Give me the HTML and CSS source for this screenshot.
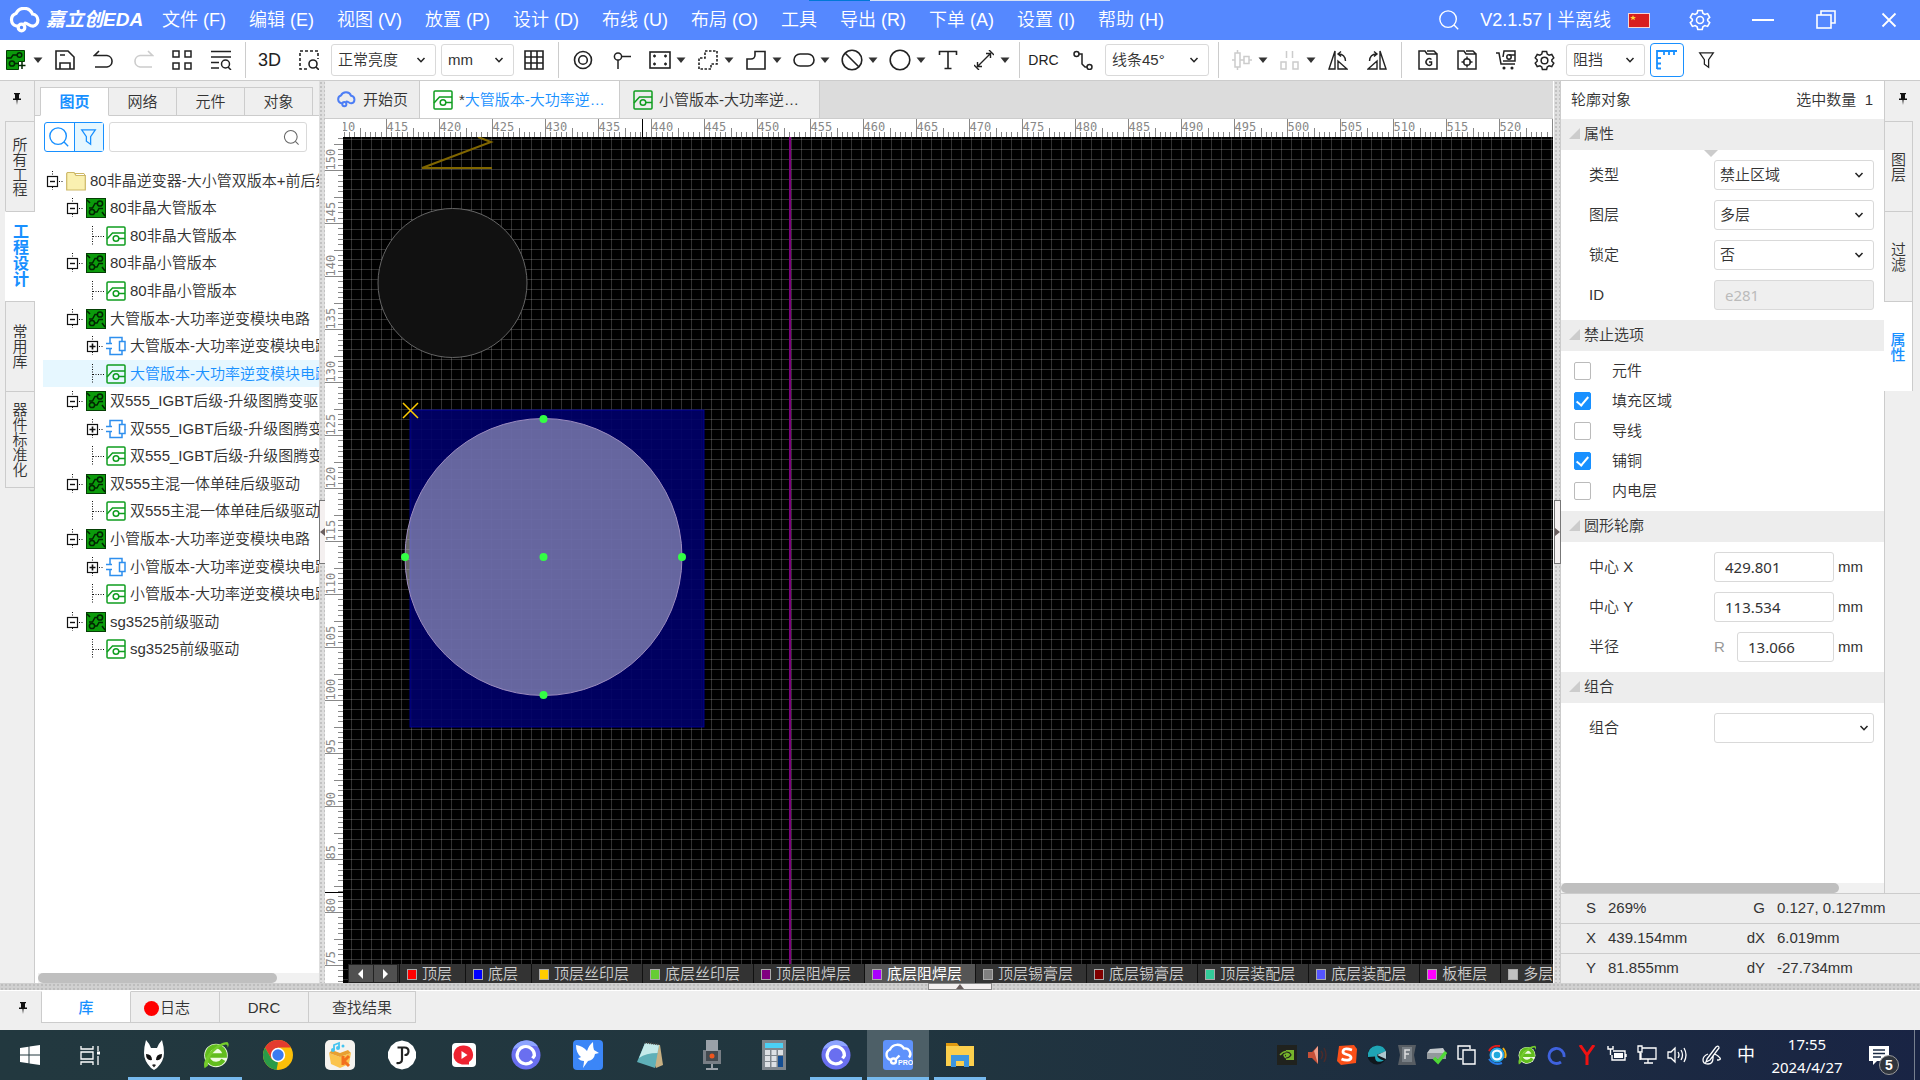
FILE: index.html
```html
<!DOCTYPE html>
<html lang="zh-CN">
<head>
<meta charset="utf-8">
<title>嘉立创EDA</title>
<link rel="stylesheet" href="styles.css">
</head>
<body>
<svg class="defs" aria-hidden="true">
  <symbol id="chev" viewBox="0 0 10 10"><path d="M1.5 3 5 6.7 8.500 3" fill="none" stroke="#222" stroke-width="1.500"/></symbol>
  <symbol id="caret" viewBox="0 0 10 10"><path d="M.5 2.500h9L5 8z" fill="#333"/></symbol>
  <symbol id="pin" viewBox="0 0 12 14"><path d="M3 1h6v1.200H8v4.300h2V8H6.600l-.6 5-.6-5H2V6.500h2V2.200H3z" fill="#111"/></symbol>
  <symbol id="mag" viewBox="0 0 24 24"><g fill="none" stroke="currentColor" stroke-width="1.500"><circle cx="11" cy="11" r="9"/><path d="m17.500 17.500 4.500 4.500"/></g></symbol>
  <symbol id="funnel" viewBox="0 0 20 20"><path d="M2 1.500h16l-5.500 8v9L7.500 15V9.500z" fill="none" stroke="currentColor" stroke-width="1.500"/></symbol>
  <symbol id="gear" viewBox="0 0 22 22"><g fill="none" stroke="currentColor" stroke-width="1.600"><path d="M8.800 1.500h4.400l.7 2.800 1.900 1.100 2.800-.8 2.100 3.700-2 2v1.400l2 2-2.100 3.700-2.800-.8-1.900 1.100-.7 2.800H8.800l-.7-2.800-1.900-1.100-2.800.8-2.100-3.700 2-2v-1.400l-2-2 2.100-3.700 2.800.8 1.900-1.100z"/><circle cx="11" cy="11" r="3.500"/></g></symbol>
  <symbol id="cloud" viewBox="0 0 34 26"><g fill="none" stroke="currentColor" stroke-width="3.200" stroke-linecap="round"><path d="M10 19H8.500A6.500 6.500 0 0 1 8 6.500 9 9 0 0 1 24.500 7 6.200 6.200 0 0 1 25 19.200c-4 0-5-3-8-3"/><circle cx="13.500" cy="20.500" r="3.300"/></g></symbol>
  <symbol id="pcb" viewBox="0 0 20 20"><rect x=".5" y=".5" width="19" height="19" fill="#0b9b0b" stroke="#043f04"/><g fill="none" stroke="#012501" stroke-width="1.500"><circle cx="14" cy="5.500" r="2.600"/><path d="M11.400 5.500H9L6.500 10H3M1 2l3 3"/><circle cx="6" cy="14" r="2.600"/><path d="M8.600 14H11l2-3.500h4M16 14l3 4"/></g></symbol>
  <symbol id="page" viewBox="0 0 20 20"><g fill="none" stroke="#0f9d1f" stroke-width="1.500"><rect x="1" y="1" width="18" height="18" rx="1"/><path d="M1 13 6.500 7H19M13 12.500h6"/><circle cx="10" cy="12.500" r="2.800"/></g></symbol>
  <symbol id="sch" viewBox="0 0 20 20"><g fill="none" stroke="#2e8fee" stroke-width="1.500"><path d="M4 7.500V1.500h12v4M4 12.500v6h12v-4M0 7.500h6M0 12.500h6"/><rect x="13.500" y="5.500" width="5.500" height="9"/></g></symbol>
  <symbol id="folder" viewBox="0 0 20 20"><path d="M.7 2.500V19h18.600V4.500H10l-2-3H1.500z" fill="#faf0b0" stroke="#cdb766" stroke-width="1.200"/><path d="M9 2.500h9l1 2" fill="none" stroke="#cdb766"/></symbol>
  <symbol id="minus" viewBox="0 0 23 20"><rect x="4.500" y="5.500" width="10" height="10" fill="#fff" stroke="#111" stroke-width="1.200"/><path d="M7 10.500h5" stroke="#111" stroke-width="1.400"/><path d="M9.500 0v5M9.500 16v3M16 10.500h5" stroke="#111" stroke-dasharray="1 1.500"/></symbol>
  <symbol id="plus" viewBox="0 0 23 20"><rect x="4.500" y="5.500" width="10" height="10" fill="#fff" stroke="#111" stroke-width="1.200"/><path d="M6.500 10.500h6M9.500 7.500v6" stroke="#111" stroke-width="1.600"/><path d="M9.500 0v5M9.500 16v3M16 10.500h5" stroke="#111" stroke-dasharray="1 1.500"/></symbol>
  <symbol id="leaf" viewBox="0 0 23 20"><path d="M9.500 0v20M10 10.500h11" stroke="#111" stroke-dasharray="1 1.500"/></symbol>
  <symbol id="cring" viewBox="0 0 32 32"><circle cx="16" cy="16" r="15.500" fill="#6a6ff0"/><path d="M2 10a15.500 15.500 0 0 1 27-3Q16 4 2 10z" fill="#8ea4ff"/><path d="M22.500 22.500a9.200 9.200 0 1 1 2.500-6l-2 3" fill="none" stroke="#fff" stroke-width="3.400"/></symbol>
  <symbol id="ebrow" viewBox="0 0 32 32"><circle cx="16" cy="16.500" r="13.500" fill="#eefbe0"/><path d="M24.500 21.500A10 10 0 1 1 26 16.500H9" fill="none" stroke="#62bd1e" stroke-width="5"/><path d="M3 31C-1 22 14 2 29 1q3 3 0 7 1-4-2-4C17 6 5 20 7 28z" fill="#74cc2c"/></symbol>
</svg>

<header class="titlebar">
  <div class="progress"><i></i></div>
  <div class="brand"><svg width="34" height="26"><use href="#cloud"/></svg><strong>嘉立创EDA</strong></div>
  <nav class="menu">
    <button>文件 (F)</button><button>编辑 (E)</button><button>视图 (V)</button><button>放置 (P)</button><button>设计 (D)</button><button>布线 (U)</button><button>布局 (O)</button><button>工具</button><button>导出 (R)</button><button>下单 (A)</button><button>设置 (I)</button><button>帮助 (H)</button>
  </nav>
  <div class="wintools">
    <button aria-label="搜索"><svg width="22" height="22"><use href="#mag"/></svg></button>
    <span class="version">V2.1.57 | 半离线</span>
    <svg class="flag" width="22" height="15" viewBox="0 0 22 15"><rect x=".5" y=".5" width="21" height="14" fill="#d81e1e" stroke="#f3d6d6"/><path d="m5 2 .8 2H8L6.300 5.300l.6 2L5 6 3.200 7.300l.6-2L2 4h2.200z" fill="#ffd83a"/></svg>
    <button class="win" aria-label="设置"><svg width="22" height="22"><use href="#gear"/></svg></button>
    <button class="win" aria-label="最小化"><svg width="24" height="22" viewBox="0 0 24 22"><path d="M1 11h22" stroke="#fff" stroke-width="2"/></svg></button>
    <button class="win" aria-label="还原"><svg width="20" height="20" viewBox="0 0 20 20"><g fill="none" stroke="#fff" stroke-width="1.600"><path d="M5 5V1h14v12h-4"/><rect x="1" y="5" width="14" height="13"/></g></svg></button>
    <button class="win" aria-label="关闭"><svg width="16" height="16" viewBox="0 0 16 16"><path d="m1.500 1.500 13 13m0-13-13 13" stroke="#fff" stroke-width="1.800"/></svg></button>
  </div>
</header>

<div class="toolbar">
  <div class="group">
    <button class="tool combo" aria-label="新建"><svg width="22" height="20" viewBox="0 0 22 20"><path d="M.5.500h18v11h-6v8H.5z" fill="#0b9b0b" stroke="#043f04"/><g fill="none" stroke="#012501" stroke-width="1.500"><circle cx="13.500" cy="5" r="2.300"/><path d="M11 5H7L5 8H1"/><circle cx="6" cy="13.500" r="2.600"/><path d="M9 13.500h4M16 12v7M12.500 15.500h7"/></g></svg><svg width="10" height="10"><use href="#caret"/></svg></button>
    <button class="tool" aria-label="保存"><svg width="20" height="20" viewBox="0 0 20 20"><g fill="none" stroke="#222" stroke-width="1.600"><path d="M1 1h12l6 6v12H1z"/><path d="M5 19v-6h10v6M5 5h5"/></g></svg></button>
    <button class="tool" aria-label="撤销"><svg width="22" height="20" viewBox="0 0 22 20"><path d="M6 1 1.500 5.500H14a5.800 5.800 0 0 1 0 11.500H2" fill="none" stroke="#222" stroke-width="1.600"/></svg></button>
    <button class="tool" aria-label="重做"><svg width="22" height="20" viewBox="0 0 22 20"><path d="m16 1 4.500 4.500H8A5.800 5.800 0 0 0 8 17h12" fill="none" stroke="#ccc" stroke-width="1.600"/></svg></button>
    <button class="tool" aria-label="排列"><svg width="20" height="20" viewBox="0 0 20 20"><path d="M1 1h6v6H1zM13 1h6v6h-6zM1 13h6v6H1zM13 13h6v6h-6z" fill="none" stroke="#222" stroke-width="1.500"/></svg></button>
    <button class="tool" aria-label="查找"><svg width="22" height="20" viewBox="0 0 22 20"><g fill="none" stroke="#222" stroke-width="1.500"><path d="M1 1.500h20M1 7h20M1 12.500h8M1 18h8M18 17l3 3"/><circle cx="15.500" cy="14" r="4"/></g></svg></button>
  </div>
  <div class="group">
    <button class="tool label3d">3D</button>
    <button class="tool" aria-label="框选查找"><svg width="20" height="20" viewBox="0 0 20 20"><g fill="none" stroke="#222" stroke-width="1.600"><path d="M8 19H1V1h18v8" stroke-dasharray="3 2"/><circle cx="14" cy="14" r="4"/><path d="m17 17 3 3"/></g></svg></button>
    <span class="pick bright"><select aria-label="亮度"><option>正常亮度</option></select><svg width="10" height="10"><use href="#chev"/></svg></span>
    <span class="pick unit"><select aria-label="单位"><option>mm</option></select><svg width="10" height="10"><use href="#chev"/></svg></span>
    <button class="tool" aria-label="网格"><svg width="20" height="20" viewBox="0 0 20 20"><path d="M1 1h18v18H1zM1 7h18M1 13h18M7 1v18M13 1v18" fill="none" stroke="#222" stroke-width="1.600"/></svg></button>
  </div>
  <div class="group">
    <button class="tool" aria-label="焊盘"><svg width="20" height="20" viewBox="0 0 20 20"><g fill="none" stroke="#222" stroke-width="1.600"><circle cx="10" cy="10" r="8.500"/><circle cx="10" cy="10" r="4.300"/></g></svg></button>
    <button class="tool" aria-label="过孔"><svg width="20" height="20" viewBox="0 0 20 20"><g fill="none" stroke="#222" stroke-width="1.500"><circle cx="6" cy="6.500" r="3.600"/><path d="M9.500 6.500H19M6 10v9"/></g></svg></button>
    <div class="draw">
      <button class="tool combo" aria-label="板框"><svg width="22" height="18" viewBox="0 0 22 18"><rect x="1" y="1" width="20" height="16" fill="none" stroke="#222" stroke-width="1.600"/><path d="M4 5h3M15 5h3M4 13h3M15 13h3M5.500 3.500v3M16.500 3.500v3M5.500 11.500v3M16.500 11.500v3" stroke="#222" stroke-width="1.300"/></svg><svg width="10" height="10"><use href="#caret"/></svg></button>
      <button class="tool combo" aria-label="铺铜"><svg width="20" height="20" viewBox="0 0 20 20"><path d="M7 1h12v13h-6v5H1V8h6z" fill="none" stroke="#222" stroke-width="1.600" stroke-dasharray="2.500 1.500"/></svg><svg width="10" height="10"><use href="#caret"/></svg></button>
      <button class="tool combo" aria-label="填充"><svg width="20" height="20" viewBox="0 0 20 20"><path d="M9 1.500h10V19H1V9h4a4 4 0 0 0 4-4z" fill="none" stroke="#222" stroke-width="1.600"/></svg><svg width="10" height="10"><use href="#caret"/></svg></button>
      <button class="tool combo" aria-label="槽"><svg width="22" height="14" viewBox="0 0 22 14"><rect x="1" y="1" width="20" height="12" rx="6" fill="none" stroke="#222" stroke-width="1.600"/></svg><svg width="10" height="10"><use href="#caret"/></svg></button>
      <button class="tool combo" aria-label="禁止区域"><svg width="22" height="22" viewBox="0 0 22 22"><g fill="none" stroke="#222" stroke-width="1.600"><circle cx="11" cy="11" r="9.800"/><path d="m4 4 14 14"/></g></svg><svg width="10" height="10"><use href="#caret"/></svg></button>
      <button class="tool combo" aria-label="圆"><svg width="22" height="22" viewBox="0 0 22 22"><circle cx="11" cy="11" r="9.800" fill="none" stroke="#222" stroke-width="1.600"/></svg><svg width="10" height="10"><use href="#caret"/></svg></button>
    </div>
    <button class="tool" aria-label="文本"><svg width="20" height="20" viewBox="0 0 20 20"><path d="M1.500 5V1.500h17V5M10 1.500v17M6.500 18.500h7" fill="none" stroke="#222" stroke-width="1.600"/></svg></button>
    <button class="tool combo measure" aria-label="尺寸"><svg width="20" height="20" viewBox="0 0 20 20"><path d="M3.500 16.500 16.500 3.500M15 0l5 5M0 15l5 5M3.500 12v4.500H8M12 3.500h4.500V8" fill="none" stroke="#222" stroke-width="1.400"/></svg><svg width="10" height="10"><use href="#caret"/></svg></button>
  </div>
  <div class="group">
    <button class="tool drc">DRC</button>
    <button class="tool" aria-label="布线"><svg width="20" height="20" viewBox="0 0 20 20"><g fill="none" stroke="#222" stroke-width="1.500"><circle cx="3.500" cy="4" r="2.500"/><circle cx="16.500" cy="17" r="2.500"/><path d="M6 4h3v10l3 3h2"/></g></svg></button>
    <span class="pick angle"><select aria-label="拐角"><option>线条45°</option></select><svg width="10" height="10"><use href="#chev"/></svg></span>
  </div>
  <div class="group">
    <div class="draw">
      <button class="tool combo" aria-label="对齐"><svg width="20" height="20" viewBox="0 0 20 20"><path d="M3 3h5v14H3zM12 6.500h5v7h-5zM5.500 0v3M5.500 17v3M0 10h3M8 10h4M17 10h3" fill="none" stroke="#ccc" stroke-width="1.500"/></svg><svg width="10" height="10"><use href="#caret"/></svg></button>
      <button class="tool combo" aria-label="分布"><svg width="20" height="20" viewBox="0 0 20 20"><path d="M1 12h5v7H1zM13 12h5v7h-5zM6.500 1v7M12.500 1v7" fill="none" stroke="#ccc" stroke-width="1.500"/></svg><svg width="10" height="10"><use href="#caret"/></svg></button>
    </div>
    <button class="tool" aria-label="左旋转"><svg width="20" height="20" viewBox="0 0 20 20"><path d="M1 19 7 1v18zM10 19v-8l9 8zM13 1.500 10 4l3 2.500M10.500 4q6.500 0 7 7" fill="none" stroke="#222" stroke-width="1.400"/></svg></button>
    <button class="tool" aria-label="右旋转"><svg width="20" height="20" viewBox="0 0 20 20"><path d="M19 19 13 1v18zM10 19v-8l-9 8zM7 1.500 10 4 7 6.500M9.500 4q-6.500 0-7 7" fill="none" stroke="#222" stroke-width="1.400"/></svg></button>
  </div>
  <div class="group last">
    <button class="tool" aria-label="导出Gerber"><svg width="20" height="20" viewBox="0 0 20 20"><path d="M1 19V1h6l2 3h10v15zM9 1h7l3 3M13.500 9.500a3.300 3.300 0 1 0 0 5V12H11" fill="none" stroke="#222" stroke-width="1.500"/></svg></button>
    <button class="tool" aria-label="导出坐标"><svg width="20" height="20" viewBox="0 0 20 20"><g fill="none" stroke="#222" stroke-width="1.500"><path d="M1 19V1h6l2 3h10v15zM9 1h7l3 3M10 6.500v3M10 14.500v3M4.500 12h3M12.500 12h3"/><circle cx="10" cy="12" r="3.300"/></g></svg></button>
    <button class="tool" aria-label="下单"><svg width="20" height="20" viewBox="0 0 20 20"><g fill="none" stroke="#222" stroke-width="1.500"><path d="M0 3h3l2 11h14M7 11h12V1H8L7 7M13 5h6"/><circle cx="13" cy="7" r="2.200"/><circle cx="8" cy="18" r=".8"/><circle cx="16" cy="18" r=".8"/></g></svg></button>
    <button class="tool" aria-label="设置"><svg width="21" height="21"><use href="#gear"/></svg></button>
    <span class="pick block"><select aria-label="布线冲突"><option>阻挡</option></select><svg width="10" height="10"><use href="#chev"/></svg></span>
    <button class="tool rulerbtn" aria-label="标尺"><svg width="22" height="20" viewBox="0 0 22 20"><path d="M1 19V1h20M1 8h4M1 13.500h4M1 18.500h4M8 1v4M13 1v4M18 1v4" fill="none" stroke="#1890ff" stroke-width="1.800"/></svg></button>
    <button class="tool" aria-label="过滤"><svg width="17" height="20"><use href="#funnel"/></svg></button>
  </div>
</div>

<main class="workspace">
  <nav class="side left">
    <button class="pinbtn" aria-label="固定"><svg width="12" height="14"><use href="#pin"/></svg></button>
    <button class="vtab">所有工程</button>
    <button class="vtab on">工程设计</button>
    <button class="vtab">常用库</button>
    <button class="vtab tall">器件标准化</button>
  </nav>

  <section class="project">
    <div class="ptabs"><button class="on">图页</button><button>网络</button><button>元件</button><button>对象</button><i></i></div>
    <div class="search">
      <div class="modes"><button aria-label="查找"><svg width="22" height="22"><use href="#mag"/></svg></button><button class="on" aria-label="过滤"><svg width="17" height="20"><use href="#funnel"/></svg></button></div>
      <label class="box"><input type="text" aria-label="搜索图页"><svg width="17" height="17"><use href="#mag"/></svg></label>
    </div>
    <div class="tree">
      <div class="row"><svg width="23" height="20"><use href="#minus"/></svg><svg width="20" height="20"><use href="#folder"/></svg><span>80非晶逆变器-大小管双版本+前后级</span></div>
      <div class="row l1"><svg width="23" height="20"><use href="#minus"/></svg><svg width="20" height="20"><use href="#pcb"/></svg><span>80非晶大管版本</span></div>
      <div class="row l2"><svg width="23" height="20"><use href="#leaf"/></svg><svg width="20" height="20"><use href="#page"/></svg><span>80非晶大管版本</span></div>
      <div class="row l1"><svg width="23" height="20"><use href="#minus"/></svg><svg width="20" height="20"><use href="#pcb"/></svg><span>80非晶小管版本</span></div>
      <div class="row l2"><svg width="23" height="20"><use href="#leaf"/></svg><svg width="20" height="20"><use href="#page"/></svg><span>80非晶小管版本</span></div>
      <div class="row l1"><svg width="23" height="20"><use href="#minus"/></svg><svg width="20" height="20"><use href="#pcb"/></svg><span>大管版本-大功率逆变模块电路</span></div>
      <div class="row l2"><svg width="23" height="20"><use href="#plus"/></svg><svg width="20" height="20"><use href="#sch"/></svg><span>大管版本-大功率逆变模块电路</span></div>
      <div class="row l2 on"><svg width="23" height="20"><use href="#leaf"/></svg><svg width="20" height="20"><use href="#page"/></svg><span>大管版本-大功率逆变模块电路</span></div>
      <div class="row l1"><svg width="23" height="20"><use href="#minus"/></svg><svg width="20" height="20"><use href="#pcb"/></svg><span>双555_IGBT后级-升级图腾变驱</span></div>
      <div class="row l2"><svg width="23" height="20"><use href="#plus"/></svg><svg width="20" height="20"><use href="#sch"/></svg><span>双555_IGBT后级-升级图腾变</span></div>
      <div class="row l2"><svg width="23" height="20"><use href="#leaf"/></svg><svg width="20" height="20"><use href="#page"/></svg><span>双555_IGBT后级-升级图腾变</span></div>
      <div class="row l1"><svg width="23" height="20"><use href="#minus"/></svg><svg width="20" height="20"><use href="#pcb"/></svg><span>双555主混一体单硅后级驱动</span></div>
      <div class="row l2"><svg width="23" height="20"><use href="#leaf"/></svg><svg width="20" height="20"><use href="#page"/></svg><span>双555主混一体单硅后级驱动</span></div>
      <div class="row l1"><svg width="23" height="20"><use href="#minus"/></svg><svg width="20" height="20"><use href="#pcb"/></svg><span>小管版本-大功率逆变模块电路</span></div>
      <div class="row l2"><svg width="23" height="20"><use href="#plus"/></svg><svg width="20" height="20"><use href="#sch"/></svg><span>小管版本-大功率逆变模块电路</span></div>
      <div class="row l2"><svg width="23" height="20"><use href="#leaf"/></svg><svg width="20" height="20"><use href="#page"/></svg><span>小管版本-大功率逆变模块电路</span></div>
      <div class="row l1"><svg width="23" height="20"><use href="#minus"/></svg><svg width="20" height="20"><use href="#pcb"/></svg><span>sg3525前级驱动</span></div>
      <div class="row l2"><svg width="23" height="20"><use href="#leaf"/></svg><svg width="20" height="20"><use href="#page"/></svg><span>sg3525前级驱动</span></div>
    </div>
    <div class="hscroll"><i></i></div>
  </section>

  <div class="vsplit"><button aria-label="收起左侧"><svg width="5" height="8" viewBox="0 0 5 8"><path d="M5 0v8L0 4z" fill="#6b5f5f"/></svg></button></div>

  <section class="editor">
    <div class="docs">
      <button class="doc home"><svg class="blue" width="21" height="17"><use href="#cloud"/></svg><span>开始页</span></button>
      <button class="doc on"><svg width="20" height="20"><use href="#page"/></svg><span><b>*</b>大管版本-大功率逆…</span></button>
      <button class="doc"><svg width="20" height="20"><use href="#page"/></svg><span>小管版本-大功率逆…</span></button>
    </div>
    <div class="board">
      <i class="corner"></i>
      <svg class="hruler" id="hruler"></svg>
      <svg class="vruler" id="vruler"></svg>
      <div class="canvas">
        <svg class="scene">
          <defs><pattern id="grid" x="8" y="2" width="10" height="10" patternUnits="userSpaceOnUse"><path d="M0 .5h10M.5 0v10" stroke="#fff" stroke-opacity=".19"/></pattern></defs>
          <rect width="100%" height="100%" fill="url(#grid)"/>
          <rect x="67" y="273" width="294" height="317" fill="#00005c" fill-opacity=".75"/>
          <rect x="67" y="273" width="294" height="317" fill="#00003c" fill-opacity=".5" stroke="#000088"/>
          <rect x="67" y="273" width="294" height="317" fill="#0000c0" fill-opacity=".25"/>
          <circle cx="200.500" cy="420" r="138.500" fill="#fff" fill-opacity=".4" stroke="#9c8cc0"/>
          <path d="M135 0 148 5 79 31h70" fill="none" stroke="#806600" stroke-width="2"/>
          <circle cx="109.500" cy="146" r="74.500" fill="#111" stroke="#666"/>
          <line x1="447" y1="0" x2="447" y2="100%" stroke="#800080" stroke-width="2"/>
          <path d="m60 266 15 15m0-15-15 15" stroke="#ffcc00" stroke-width="1.500"/>
          <g fill="#33ff44"><circle cx="200.500" cy="282" r="4"/><circle cx="200.500" cy="420" r="4"/><circle cx="62" cy="420" r="4"/><circle cx="339" cy="420" r="4"/><circle cx="200.500" cy="558" r="4"/></g>
        </svg>
        <div class="layers">
          <div class="nav"><button aria-label="向左"><svg width="6" height="10" viewBox="0 0 6 10"><path d="M5 0v10L0 5z" fill="#fff"/></svg></button><button aria-label="向右"><svg width="6" height="10" viewBox="0 0 6 10"><path d="M1 0v10l5-5z" fill="#fff"/></svg></button></div>
          <button><i class="red"></i>顶层</button><button><i class="navy"></i>底层</button><button><i class="gold"></i>顶层丝印层</button><button><i class="green"></i>底层丝印层</button><button><i class="purple"></i>顶层阻焊层</button><button class="on"><i class="violet"></i>底层阻焊层</button><button><i class="gray"></i>顶层锡膏层</button><button><i class="maroon"></i>底层锡膏层</button><button><i class="teal"></i>顶层装配层</button><button><i class="indigo"></i>底层装配层</button><button><i class="magenta"></i>板框层</button><button><i class="silver"></i>多层</button>
        </div>
      </div>
    </div>
  </section>

  <div class="vsplit right"><button aria-label="收起右侧"><svg width="5" height="8" viewBox="0 0 5 8"><path d="M0 0v8l5-4z" fill="#6b5f5f"/></svg></button></div>

  <section class="inspector">
    <div class="upper">
      <div class="props">
        <div class="ihead"><span>轮廓对象</span><span>选中数量&nbsp; 1</span></div>
        <h2><i></i>属性</h2>
        <div class="fields drop">
          <label class="f"><span>类型</span><span class="pick"><select><option>禁止区域</option></select><svg width="10" height="10"><use href="#chev"/></svg></span></label>
          <label class="f"><span>图层</span><span class="pick"><select><option>多层</option></select><svg width="10" height="10"><use href="#chev"/></svg></span></label>
          <label class="f"><span>锁定</span><span class="pick"><select><option>否</option></select><svg width="10" height="10"><use href="#chev"/></svg></span></label>
          <label class="f"><span>ID</span><input type="text" value="e281" disabled></label>
        </div>
        <h2><i></i>禁止选项</h2>
        <div class="checks">
          <label><input type="checkbox"><span>元件</span></label>
          <label><input type="checkbox" checked><span>填充区域</span></label>
          <label><input type="checkbox"><span>导线</span></label>
          <label><input type="checkbox" checked><span>铺铜</span></label>
          <label><input type="checkbox"><span>内电层</span></label>
        </div>
        <h2><i></i>圆形轮廓</h2>
        <div class="fields">
          <label class="f"><span>中心 X</span><span class="num"><input type="text" value="429.801">mm</span></label>
          <label class="f"><span>中心 Y</span><span class="num"><input type="text" value="113.534">mm</span></label>
          <label class="f"><span>半径</span><span class="num"><em>R</em><input type="text" value="13.066">mm</span></label>
        </div>
        <h2><i></i>组合</h2>
        <div class="fields">
          <label class="f"><span>组合</span><span class="pick end"><select><option></option></select><svg width="10" height="10"><use href="#chev"/></svg></span></label>
        </div>
        <div class="hscroll"><i></i></div>
      </div>
      <nav class="side rightside">
        <button class="pinbtn" aria-label="固定"><svg width="12" height="14"><use href="#pin"/></svg></button>
        <button class="vtab">图层</button>
        <button class="vtab">过滤</button>
        <button class="vtab on">属性</button>
      </nav>
    </div>
    <dl class="status">
      <div><dt>S</dt><dd>269%</dd><dt>G</dt><dd>0.127, 0.127mm</dd></div>
      <div><dt>X</dt><dd>439.154mm</dd><dt>dX</dt><dd>6.019mm</dd></div>
      <div><dt>Y</dt><dd>81.855mm</dd><dt>dY</dt><dd>-27.734mm</dd></div>
    </dl>
  </section>
</main>

<div class="hsplit"><button aria-label="展开底部"><svg width="8" height="5" viewBox="0 0 8 5"><path d="M0 5h8L4 0z" fill="#6b5f5f"/></svg></button></div>

<div class="bottom">
  <button class="pinbtn" aria-label="固定"><svg width="12" height="14"><use href="#pin"/></svg></button>
  <button class="btab on">库</button><button class="btab log"><i></i>日志</button><button class="btab">DRC</button><button class="btab wide">查找结果</button>
</div>

<footer class="taskbar">
  <button class="sys" aria-label="开始"><svg width="20" height="20" viewBox="0 0 20 20"><path d="M0 3 8.500 1.800v7.700H0zM9.500 1.600 20 0v9.500H9.500zM0 10.500h8.500v7.700L0 17zM9.500 10.500H20V20L9.500 18.400z" fill="#fff"/></svg></button>
  <button class="sys" aria-label="任务视图"><svg width="20" height="20" viewBox="0 0 20 20"><path d="M1 1v3h12V1M1 7h12v7H1zM1 20v-3h12v3M18 1v5M18 11v9" fill="none" stroke="#fff" stroke-width="1.300"/><path d="M17 6.500h3v3h-3z" fill="#fff"/></svg></button>
  <button class="app run" aria-label="foobar2000"><svg width="24" height="30" viewBox="0 0 24 30"><path d="M4 0q3 3 5 8h6q2-5 5-8 2 7 2 13 0 8-7 15l-3 2-3-2Q2 21 2 13 2 7 4 0z" fill="#fff"/><path d="M4 14q6 0 6 6-6 1-6-6zM20 14q-6 0-6 6 6 1 6-6z" fill="#111"/><path d="M10 25q2-1.500 4 0l-2 2.500z" fill="#222"/></svg></button>
  <button class="app run" aria-label="浏览器"><svg width="28" height="30"><use href="#ebrow"/></svg></button>
  <button class="app" aria-label="Chrome"><svg width="30" height="30" viewBox="0 0 30 30"><circle cx="15" cy="15" r="15" fill="#fbbf09"/><path d="M2 7.500A15 15 0 0 1 28 7.500H15L8.500 19z" fill="#e33b2e"/><path d="M2 7.500 8.500 19l6.500 3.500-1.500 7.400A15 15 0 0 1 2 7.500z" fill="#2a9b48"/><circle cx="15" cy="15" r="7.200" fill="#fff"/><circle cx="15" cy="15" r="5.700" fill="#3a7bf0"/></svg></button>
  <button class="app" aria-label="音乐盒"><svg width="30" height="30" viewBox="0 0 30 30"><rect width="30" height="30" rx="5" fill="#f5f3ef"/><path d="m4 13 11 4 11-4-2 11-9 4-9-4z" fill="#fbc44d"/><path d="m4 13 3-3 8 3 8-3 3 3-11 4z" fill="#e8a030"/><path d="M18 16v9M24 16l-5 5 5 5" stroke="#f2701d" stroke-width="3" fill="none"/><path d="M9 10V5l5-2v5" stroke="#45c4f0" stroke-width="1.800" fill="none"/><g fill="#45c4f0"><circle cx="8" cy="10" r="2"/><circle cx="13" cy="8" r="2"/><circle cx="18" cy="6" r="1.500"/></g></svg></button>
  <button class="app" aria-label="JP"><svg width="30" height="30" viewBox="0 0 30 30"><path d="M9 2 15 .5 21 2l5 4 3 6v6l-3 6-5 4-6 1.500L9 28l-5-4-3-6v-6l3-6z" fill="#fff"/><path d="M15 7v12.500q0 4-5.500 3.500M10.500 7.500h7q4 0 4 3.800t-4 3.700" fill="none" stroke="#222" stroke-width="2.200"/></svg></button>
  <button class="app" aria-label="播放器"><svg width="24" height="24" viewBox="0 0 24 24"><rect width="24" height="24" rx="4" fill="#fff"/><path d="M12 2.500a9 9 0 0 1 5 16.500v2.500H10A9.500 9.500 0 0 1 12 2.500z" fill="#ee2230"/><path d="m9.500 8 6 4-6 4z" fill="#fff"/></svg></button>
  <button class="app" aria-label="浏览器C"><svg width="30" height="30"><use href="#cring"/></svg></button>
  <button class="app" aria-label="飞鸟"><svg width="30" height="30" viewBox="0 0 30 30"><rect width="30" height="30" rx="4" fill="#3b86f7"/><path d="M3 5q7 1 11 6 2-6 6-9 0 5 1 8l5 3-4 1q-1 6-7 7l-5 7q1-5 1-7-4 0-6-3 2 0 3-1-5-4-5-12z" fill="#fff"/></svg></button>
  <button class="app" aria-label="记事本"><svg width="28" height="28" viewBox="0 0 28 28"><path d="m10 2 14 2 3 20-7 3z" fill="#c8b083"/><path d="m9 2 14 2-4 23L1 21z" fill="#5fb0b8"/><path d="m9 2 14 2-1.500 8Q10 12 3 17z" fill="#c5eaea"/><path d="m9 1.500 14 2" stroke="#444" stroke-width="2" stroke-dasharray="1 1"/></svg></button>
  <button class="app" aria-label="录音机"><svg width="18" height="30" viewBox="0 0 18 30"><path d="M3 0h12v20H3z" fill="#9aa1a8"/><path d="M0 10h3v10h12V10h3v14H0z" fill="#787e85"/><path d="M3 11h12v10H3z" fill="#444a50"/><circle cx="9" cy="16" r="2.500" fill="#f0561d"/><path d="M9 24v5M3 29h12" stroke="#9aa1a8" stroke-width="2"/></svg></button>
  <button class="app" aria-label="计算器"><svg width="24" height="30" viewBox="0 0 24 30"><path d="M0 0h24v30H0z" fill="#7f878e"/><path d="M3 3h18v5H3z" fill="#4bd0f5"/><path d="M3 10h5v5H3zM9.500 10h5v5h-5zM16 10h5v5h-5zM3 16h5v5H3zM9.500 16h5v5h-5zM3 22h5v5H3zM9.500 22h5v5h-5z" fill="#dde1e5"/><path d="M16 16h5v11h-5z" fill="#154e92"/></svg></button>
  <button class="app run" aria-label="浏览器C"><svg width="30" height="30"><use href="#cring"/></svg></button>
  <button class="app run active" aria-label="嘉立创EDA PRO"><svg width="30" height="30" viewBox="0 0 30 30"><rect width="30" height="30" rx="3" fill="#5f92fb"/><g fill="none" stroke="#fff" stroke-width="2.400"><path d="M8 20a5.500 5.500 0 0 1-1-10.500 8 8 0 0 1 14-1 5.500 5.500 0 0 1 5 9"/><circle cx="10.500" cy="21" r="2.500"/><path d="m12.500 19.500 4-4"/></g><text x="15" y="25" font-size="7" font-weight="700" fill="#fff">PRO</text></svg></button>
  <button class="app run" aria-label="文件资源管理器"><svg width="28" height="24" viewBox="0 0 28 24"><path d="M0 0h11l3 4H0z" fill="#e09a10"/><path d="M0 3h28v20H0z" fill="#fccf4d"/><path d="M5 12h18v12h-5v-6h-8v6H5z" fill="#3d96e0"/></svg></button>
  <div class="tray">
    <svg class="ti" viewBox="0 0 20 20"><path d="M0 0h20v20H0z" fill="#20221e"/><path d="M9 5h8v10H9z" fill="#76b42c"/><path d="M3 10q4-5 9-3 4 3 0 5-4 2-5-2 2-2 4 0" fill="none" stroke="#76b42c" stroke-width="1.500"/><path d="M9 7q4 0 5 3-2 3-5 3" fill="none" stroke="#20221e" stroke-width="1.200"/></svg>
    <svg class="ti" viewBox="0 0 20 20"><path d="M1 7h4l6-6v18l-6-6H1z" fill="#c65038"/><path d="m7 6 4-5v18z" fill="#eda08c"/><path d="M14 6q3 4 0 8M17 3q4 7 0 14" fill="none" stroke="#4c2b2a" stroke-width="1.500"/></svg>
    <svg class="ti" viewBox="0 0 20 20"><path d="m2 1 15-1 3 4-1 14-15 2-4-4z" fill="#fa5018"/><path d="M15 5q-9-3-9 2c0 3 8 2 8 5.500s-6 3-9.500 1.500" fill="none" stroke="#fff" stroke-width="2.800"/></svg>
    <svg class="ti" viewBox="0 0 20 20"><circle cx="10" cy="10" r="9.500" fill="#10171d"/><path d="M1 12Q0 2 10 .5q7 0 9 6l-9 3q0 4 7 6-9 4-9-4z" fill="#1fa5b5"/><path d="m10 10 9-4v8z" fill="#adc7cf"/></svg>
    <svg class="ti" viewBox="0 0 20 20"><path d="M1 0h18l-2 10 2 10H1l2-10z" fill="#575d63"/><path d="M5 2h10v15H5z" fill="#777e84"/><path d="M8 14V5h5M8 9h4" fill="none" stroke="#ddd" stroke-width="1.500"/></svg>
    <svg class="ti" viewBox="0 0 20 20"><path d="m3 4 13-1 3 5v6H0V8z" fill="#c3c8cb"/><path d="M0 8h19v6H0z" fill="#92989c"/><path d="m7 13 4 4 8-10" fill="none" stroke="#4fd836" stroke-width="3.500"/></svg>
    <svg class="ti" viewBox="0 0 20 20"><path d="M5 14H1V1h12v3M6 5h12v14H6z" fill="none" stroke="#fff" stroke-width="1.400"/></svg>
    <svg class="ti" viewBox="0 0 20 20"><circle cx="10" cy="10" r="6.500" fill="#f4fbff" stroke="#27a5e5" stroke-width="2"/><circle cx="10" cy="10" r="3.300" fill="#22a9dc"/><g fill="none" stroke-width="2"><path d="M2 6Q5 0 13 1" stroke="#e01b1b"/><path d="M16 3q4 5 2 10" stroke="#f6b211"/><path d="M15 18q-8 3-13-4" stroke="#267be8"/></g></svg>
    <svg class="ti" viewBox="0 0 32 32"><use href="#ebrow"/></svg>
    <svg class="ti" viewBox="0 0 20 20"><path d="M14 17a7.500 7.500 0 1 1 3-5" fill="none" stroke="#3f62de" stroke-width="2.800"/></svg>
    <svg class="ti" viewBox="0 0 20 20"><path d="m3 0 7 10 7-10M10 10v10" fill="none" stroke="#ef1212" stroke-width="3"/></svg>
    <svg class="ti" viewBox="0 0 20 20"><path d="M6 6h12v9H5v-5M19 9v3M1 1v3h5V1M3.500 4v6" fill="none" stroke="#fff" stroke-width="1.400"/><path d="M7 8h9v5H7z" fill="#fff"/></svg>
    <svg class="ti" viewBox="0 0 20 20"><path d="M5 3h14v11H4V8M11 14v4M7 18h9M1 1h4v6H1zM3 7v8" fill="none" stroke="#fff" stroke-width="1.300"/></svg>
    <svg class="ti" viewBox="0 0 20 20"><path d="M1 7h3l4-4v14l-4-4H1zM11 7q2 3 0 6M14 5q3 5 0 10M17 3q4 7 0 14" fill="none" stroke="#fff" stroke-width="1.300"/></svg>
    <svg class="ti pen" viewBox="0 0 20 20"><path d="m5 14 9-12q3-2 3 1L8 15l-4 2zM6 9q-5 2-5 6t5 4 5-6 5-2-1 4" fill="none" stroke="#fff" stroke-width="1.300"/></svg>
    <span class="ime">中</span>
    <time class="clock"><span>17:55</span><span>2024/4/27</span></time>
    <button class="note" aria-label="通知"><svg width="20" height="19" viewBox="0 0 20 19"><path d="M0 0h20v15H8l-4 4v-4H0z" fill="#fff"/><path d="M4 4h12M4 7.500h12M4 11h8" stroke="#1c2c45" stroke-width="1.400"/></svg><b>5</b></button>
  </div>
</footer>
<script src="rulers.js"></script>
</body>
</html>
```
FILE: styles.css
```css
* { box-sizing: border-box; }
body { margin: 0; height: 100vh; display: flex; flex-direction: column; overflow: hidden; background: #efefef; color: #333; font: 350 15px/20px "Liberation Sans", "Noto Sans CJK SC", sans-serif; }
button { border: 0; padding: 0; margin: 0; background: none; color: inherit; font: inherit; white-space: nowrap; }
input, select { font: inherit; color: inherit; min-width: 0; }
svg { display: block; flex: none; }
.defs { width: 0; height: 0; position: absolute; }

/* title bar */
.titlebar { position: relative; flex: none; display: flex; align-items: center; height: 40px; padding: 0 0 0 8px; background: #5588ff; color: #fff; font-size: 18px; }
.progress { position: absolute; top: 0; left: 809px; width: 301px; height: 1px; background: #d5e0f4; }
.progress i { display: block; width: 61px; height: 1px; background: #0078d7; }
.brand { display: flex; align-items: center; gap: 4px; width: 154px; }
.brand strong { font-size: 19px; font-style: italic; font-weight: 700; white-space: nowrap; }
.menu { display: flex; gap: 23px; }
.menu button { height: 40px; }
.wintools { margin-left: auto; display: flex; align-items: center; }
.version { margin: 0 17px 0 20px; white-space: nowrap; }
.flag { margin-right: 18px; }
.win { width: 63px; height: 40px; display: grid; place-items: center; }

/* tool bar */
.toolbar { flex: none; display: flex; align-items: center; height: 41px; padding-left: 3px; background: #fff; border-bottom: 1px solid #ccc; }
.group { display: flex; align-items: center; height: 36px; padding-right: 5px; margin-right: 4px; border-right: 1px solid #ccc; }
.group.last { border: 0; padding-left: 2px; }
.draw { display: flex; gap: 6px; margin-left: 5px; }
.tool { width: 39px; height: 34px; display: flex; align-items: center; justify-content: center; color: #222; }
.combo { width: 42px; display: grid; grid-template-columns: 28px 14px; place-items: center; }
.measure { margin: 0 2px 0 3px; }
.label3d { font-size: 18px; }
.drc { font-size: 14px; font-family: "Liberation Sans Narrow", "Liberation Sans", sans-serif; }
.pick { position: relative; display: block; height: 32px; }
.pick select { width: 100%; height: 100%; padding: 0 6px; border: 1px solid #d9d9d9; border-radius: 3px; background: #fff; appearance: none; }
.pick svg { position: absolute; right: 10px; top: 50%; margin-top: -5px; pointer-events: none; }
.bright { width: 105px; margin-left: 3px; }
.unit { width: 73px; margin-left: 5px; }
.angle { width: 104px; margin-left: 3px; margin-right: 4px; }
.block { width: 79px; margin-left: 2px; }
.rulerbtn { width: 34px; margin: 0 3px 0 5px; border: 1px solid #1890ff; border-radius: 4px; }

/* workspace */
.workspace { flex: 1; min-height: 0; display: flex; }
.side { width: 36px; flex: none; display: flex; flex-direction: column; background: #efefef; }
.side.left { padding-left: 5px; border-right: 1px solid #ccc; width: 35px; }
.rightside { padding-right: 7px; border-left: 1px solid #ccc; }
.pinbtn { flex: none; width: 23px; height: 40px; padding-bottom: 4px; display: grid; place-items: center; }
.rightside .pinbtn { width: 35px; }
.vtab { height: 90px; display: flex; align-items: center; justify-content: center; padding-right: 3px; writing-mode: vertical-rl; border: 1px solid #ccc; border-width: 1px 0 0 1px; }
.vtab.tall { height: 97px; border-bottom-width: 1px; }
.vtab.on { background: #fff; color: #1890ff; font-weight: 700; border-left-color: #fff; }
.left .vtab.on { margin-right: -1px; padding-bottom: 4px; font-size: 16px; }
.rightside .vtab { border-width: 1px 1px 0 0; }
.rightside .vtab.on { margin-left: -1px; border-right-color: #ccc; font-weight: 500; }

.project { width: 284px; flex: none; display: flex; flex-direction: column; background: #fff; overflow: hidden; }
.ptabs { flex: none; display: flex; height: 35px; padding: 6px 0 0 0; background: #efefef; }
.ptabs::before { content: ""; width: 5px; border-bottom: 1px solid #ccc; }
.ptabs button { width: 68px; flex: none; border: 1px solid #ccc; border-left-width: 0; background: #efefef; }
.ptabs button.on { width: 69px; border-left-width: 1px; border-bottom-color: #fff; background: #fff; color: #1890ff; font-weight: 700; }
.ptabs i { flex: 1; border-bottom: 1px solid #ccc; }
.search { display: flex; gap: 5px; padding: 6px 12px 15px 9px; }
.modes { flex: none; display: flex; width: 60px; height: 30px; border: 1px solid #1890ff; border-radius: 3px; color: #1890ff; }
.modes button { flex: 1; display: grid; place-items: center; }
.modes .on { background: #e6f7ff; border-left: 1px solid #1890ff; }
.box { flex: 1; min-width: 0; display: flex; align-items: center; height: 30px; padding-right: 6px; border: 1px solid #d9d9d9; border-radius: 3px; color: #666; }
.box input { flex: 1; border: 0; background: none; }
.tree { height: 496px; display: grid; grid-auto-rows: 1fr; padding-left: 8px; }
.row { display: flex; align-items: center; white-space: nowrap; overflow: hidden; }
.row span { margin-left: 4px; }
.l1 { padding-left: 20px; }
.l2 { padding-left: 40px; }
.row.on { background: #e6f7ff; color: #1890ff; }
.hscroll { margin-top: auto; height: 10px; background: #f1f1f1; }
.hscroll i { display: block; width: 86%; height: 10px; border-radius: 5px; background: #bfbfbf; }
.project .hscroll { margin-left: 3px; }
.project .hscroll i { width: 85%; }

.vsplit { flex: none; width: 6px; display: grid; align-items: center; background: #dedede radial-gradient(circle, #c2c2c2 1px, #dedede 1px) 0 0 / 4px 4px; }
.vsplit.right { width: 8px; border-left: 1px solid #fff; border-right: 1px solid #ccc; }
.vsplit button { height: 64px; width: 100%; border: 1px solid #777; background: #f4f0f0; display: grid; place-items: center; }
.hsplit { flex: none; height: 8px; display: grid; justify-content: center; background: #d0d0d0 radial-gradient(circle, #bdbdbd 1px, #d0d0d0 1px) 0 0 / 4px 4px; border-bottom: 1px solid #fff; }
.hsplit button { width: 64px; height: 7px; border: 1px solid #888; background: #f4f0f0; display: grid; place-items: center; }

/* editor */
.editor { flex: 1; min-width: 0; display: flex; flex-direction: column; }
.docs { flex: none; height: 38px; display: flex; background: #dcdcdc; border-bottom: 1px solid #ccc; }
.doc { width: 200px; display: flex; align-items: center; gap: 6px; padding-left: 13px; background: #ededed; border-right: 1px solid #ccc; }
.doc.home { width: 95px; padding-left: 11px; }
.doc.on { background: #fff; color: #1890ff; }
.doc b { color: #333; font-weight: 400; }
.blue { color: #4d7ef5; }
.board { flex: 1; min-height: 0; display: grid; grid-template: 18px 1fr / 18px 1fr; background: #fff; }
.hruler, .vruler { width: 100%; height: 100%; overflow: hidden; }
.hruler text, .vruler text { font: 12px "DejaVu Sans Mono", monospace; fill: #888; }
.canvas { position: relative; background: #000; overflow: hidden; }
.scene { width: 100%; height: 100%; position: absolute; inset: 0; }
.layers { position: absolute; left: 5px; right: 0; bottom: 0; height: 19px; display: flex; background: #333; color: #ccc; overflow: hidden; line-height: 20px; }
.layers > button { flex: none; display: flex; align-items: center; padding: 0 13px 0 7px; border-left: 1px solid #111; height: 20px; }
.layers > button.on { background: #555; color: #fff; font-weight: 400; }
.layers i { width: 10px; height: 11px; margin-right: 5px; border: 1px solid #aaa; }
.nav { flex: none; display: flex; width: 50px; margin-right: 1px; padding: 1px; background: #222; }
.nav button { flex: 1; background: #505050; display: grid; place-items: center; }
.nav button + button { border-left: 1px solid #222; }
.red { background: #f00; } .navy { background: #00f; } .gold { background: #fc0; } .green { background: #66cc33; }
.purple { background: #800080; } .violet { background: #a0f; } .gray { background: #808080; } .maroon { background: #800000; }
.teal { background: #33cc99; } .indigo { background: #5555ff; } .magenta { background: #f0f; } .silver { background: #c0c0c0; }

/* inspector */
.inspector { flex: none; width: 359px; display: flex; flex-direction: column; }
.upper { flex: 1; min-height: 0; display: flex; }
.props { flex: 1; display: flex; flex-direction: column; background: #fff; }
.ihead { display: flex; justify-content: space-between; align-items: center; height: 38px; padding: 0 11px 0 10px; }
h2 { margin: 0; height: 31px; padding: 0 0 2px 8px; display: flex; align-items: center; gap: 4px; background: #ededed; font: inherit; }
h2 i { border: solid transparent; border-width: 0 0 11px 11px; border-bottom-color: #ccc; }
.fields { position: relative; display: grid; gap: 10px; padding: 10px; }
.drop::before { content: ""; position: absolute; top: 0; left: 143px; border: solid transparent; border-width: 7px 7px 0; border-top-color: #ccc; }
.f { display: grid; grid-template-columns: 125px 1fr; height: 30px; padding-left: 18px; align-items: center; }
.f .pick { height: 30px; }
.f .pick.end svg { right: 5px; }
.f select { padding: 0 5px; }
.f input { width: 100%; height: 30px; padding: 0 10px; border: 1px solid #d9d9d9; border-radius: 3px; font-family: "Noto Sans", sans-serif; font-weight: 400; }
.f input:disabled { background: #efefef; color: #bbb; }
.num { display: flex; align-items: center; gap: 4px; padding-right: 11px; }
.num em { flex: none; width: 19px; font-style: normal; color: #999; }
.checks { display: grid; grid-auto-rows: 30px; padding: 5px 13px; }
.checks label { display: flex; align-items: center; gap: 21px; }
.checks input { appearance: none; width: 17px; height: 18px; margin: 0; border: 1px solid #bbb; border-radius: 2px; background: #fff; display: grid; place-items: center; }
.checks input:checked { background: #1890ff; border-color: #1890ff; }
.checks input:checked::before { content: ""; width: 5px; height: 10px; margin-bottom: 3px; border: solid #fff; border-width: 0 2px 2px 0; rotate: 40deg; }
.status { margin: 0; background: #ededed; }
.status div { height: 30px; padding-bottom: 2px; display: grid; grid-template-columns: 35px 1fr 32px 143px; column-gap: 12px; align-items: center; border-top: 1px solid #ccc; }
.status dt { text-align: right; }
.status dd { margin: 0; }

/* bottom panel */
.bottom { flex: none; display: flex; height: 39px; background: #efefef; }
.bottom .pinbtn { width: 41px; padding: 0 0 2px 5px; height: 36px; }
.btab { width: 89px; height: 32px; padding-top: 2px; border: 1px solid #ccc; border-left-width: 0; display: flex; align-items: center; justify-content: center; }
.btab.on { width: 90px; border-left-width: 1px; border-top-color: #fff; background: #fff; color: #1890ff; font-weight: 500; }
.btab.wide { width: 107px; }
.btab.log { padding-right: 16px; gap: 1px; }
.btab i { width: 15px; height: 15px; border-radius: 50%; background: #f00; }

/* task bar */
.taskbar { flex: none; display: flex; height: 50px; background: linear-gradient(90deg, #22383f, #21363f 45%, #1d2d40 75%, #192444); color: #fff; }
.sys { width: 60px; display: grid; place-items: center; }
.sys + .app { margin-left: 3px; }
.app { width: 62px; display: grid; place-items: center; border: solid transparent; border-width: 0 5px; }
.app.run { background: linear-gradient(#76b9ed, #76b9ed) 0 100% / 100% 3px no-repeat padding-box; }
.app.active { border-width: 0; background: linear-gradient(#76b9ed, #76b9ed) 0 100% / 100% 3px no-repeat, #4d5f67; }
.tray { margin-left: auto; display: flex; align-items: center; gap: 10px; padding-right: 5px; }
.ti { width: 20px; height: 20px; }
.ti.pen { margin-left: 5px; }
.ime { margin-left: 5px; font-size: 18px; font-weight: 400; width: 18px; }
.clock { display: grid; width: 84px; gap: 3px; text-align: center; font: 400 15px/20px "Noto Sans", sans-serif; }
.note { position: relative; width: 56px; height: 50px; display: grid; place-items: center start; padding-left: 10px; border-right: 1px solid #77808f; }
.note b { position: absolute; left: 20px; bottom: 5px; width: 20px; height: 20px; border-radius: 50%; border: 1px solid #999; background: #30353d; font-size: 14px; line-height: 18px; }
```
FILE: rulers.js
```js
const NS = 'http://www.w3.org/2000/svg';
const PITCH = 53;

function add(svg, name, attrs, text) {
  const el = document.createElementNS(NS, name);
  for (const key in attrs) el.setAttribute(key, attrs[key]);
  if (text !== undefined) el.textContent = text;
  svg.appendChild(el);
}

// depth of a tick: every 10th is a labelled one, every 5th is medium
const depth = i => (i % 10 === 0 ? 18 : i % 5 === 0 ? 9 : 5);

function horizontal(svg, origin, value, cursor) {
  const width = svg.getBoundingClientRect().width;
  for (let i = -10; origin + i * PITCH / 10 < width; i++) {
    const x = Math.round(origin + i * PITCH / 10) + 0.5;
    add(svg, 'path', { d: `M${x} 18v-${depth(i)}`, stroke: '#888' });
    if (i % 10 === 0) add(svg, 'text', { x, y: 12 }, value + i / 2);
  }
  add(svg, 'path', { d: `M${cursor} 0v18`, stroke: '#000' });
}

function vertical(svg, origin, value, cursor) {
  const height = svg.getBoundingClientRect().height;
  for (let i = -9; origin + i * PITCH / 10 < height; i++) {
    const y = Math.round(origin + i * PITCH / 10) + 0.5;
    add(svg, 'path', { d: `M18 ${y}h-${depth(i)}`, stroke: '#888' });
    if (i % 10 === 0) add(svg, 'text', { transform: `translate(10 ${y}) rotate(-90)` }, value - i / 2);
  }
  add(svg, 'path', { d: `M0 ${cursor}h18`, stroke: '#000' });
}

horizontal(document.getElementById('hruler'), 43, 415, 299.5);
vertical(document.getElementById('vruler'), 33, 150, 755.5);
```
